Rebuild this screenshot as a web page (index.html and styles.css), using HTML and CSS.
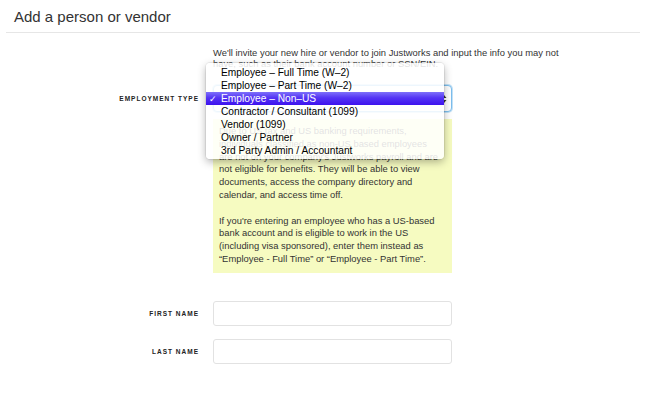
FILE: index.html
```html
<!DOCTYPE html>
<html lang="en">
<head>
<meta charset="utf-8">
<title>Add a person or vendor</title>
<link rel="stylesheet" href="styles.css">
</head>
<body>
<div class="page">
  <header class="page-header">
    <h1 class="page-title">Add a person or vendor</h1>
  </header>

  <div class="form">
    <div class="row row-intro">
      <div></div>
      <p class="intro">We'll invite your new hire or vendor to join Justworks and input the info you may not have, such as their bank account number or SSN/EIN.</p>
    </div>

    <div class="row row-type">
      <label class="field-label">Employment type</label>
      <div class="select-wrap">
        <div class="select">
          <span class="select-value">Employee - Non-US</span>
          <svg class="select-arrows" width="6" height="10" viewBox="0 0 6 10"><path d="M0.5 4 L3 1 L5.5 4 Z M0.5 6 L3 9 L5.5 6 Z" fill="#333"/></svg>
        </div>
        <ul class="menu">
          <li class="menu-item"><span class="check"></span>Employee – Full Time (W–2)</li>
          <li class="menu-item"><span class="check"></span>Employee – Part Time (W–2)</li>
          <li class="menu-item selected"><span class="check">✓</span>Employee – Non–US</li>
          <li class="menu-item"><span class="check"></span>Contractor / Consultant (1099)</li>
          <li class="menu-item"><span class="check"></span>Vendor (1099)</li>
          <li class="menu-item"><span class="check"></span>Owner / Partner</li>
          <li class="menu-item"><span class="check"></span>3rd Party Admin / Accountant</li>
        </ul>
      </div>
    </div>

    <div class="row row-info">
      <div></div>
      <div class="info-box">
        <p>Due to US tax and US banking requirements, individuals classified as non-US based employees are not on your company's Justworks payroll and are not eligible for benefits. They will be able to view documents, access the company directory and calendar, and access time off.</p>
        <p>If you're entering an employee who has a US-based bank account and is eligible to work in the US (including visa sponsored), enter them instead as “Employee - Full Time” or “Employee - Part Time”.</p>
      </div>
    </div>

    <div class="row row-first">
      <label class="field-label">First name</label>
      <div class="input"></div>
    </div>

    <div class="row row-last">
      <label class="field-label">Last name</label>
      <div class="input"></div>
    </div>
  </div>
</div>
</body>
</html>
```

FILE: styles.css
```css
* { box-sizing: border-box; }

body {
  margin: 0;
  background: #ffffff;
  font-family: "Liberation Sans", Arial, sans-serif;
  color: #333333;
}

.page {
  margin: 0 9px 0 6px;
}

.page-header {
  height: 33px;
  display: flex;
  align-items: center;
  padding-left: 8px;
  border-bottom: 1px solid #e6e6e6;
}

.page-title {
  margin: 0;
  font-size: 15px;
  font-weight: normal;
  color: #333333;
}

.form {
  display: flex;
  flex-direction: column;
}

.row {
  display: grid;
  grid-template-columns: 193px 239px;
  column-gap: 14px;
  align-items: center;
}

.row-intro { margin-top: 14px; }
.row-type { margin-top: 16px; }
.row-info { margin-top: 7px; }
.row-first { margin-top: 28px; }
.row-last { margin-top: 13px; }

.intro {
  margin: 0;
  width: 360px;
  font-size: 9.4px;
  line-height: 11px;
  color: #333333;
}

.field-label {
  text-align: right;
  font-size: 6.5px;
  font-weight: bold;
  letter-spacing: 1px;
  text-transform: uppercase;
  color: #222222;
}

.select-wrap {
  position: relative;
}

.select {
  height: 27px;
  border: 1px solid #7dbfee;
  box-shadow: 0 0 0 1px rgba(125, 191, 238, 0.45);
  border-radius: 4px;
  background: #ffffff;
  display: flex;
  align-items: center;
  justify-content: space-between;
  padding: 0 4px 0 8px;
  font-size: 10px;
  color: #333333;
}

.select-arrows { display: block; }

.menu {
  position: absolute;
  top: -22px;
  left: -7px;
  width: 238px;
  margin: 0;
  padding: 3px 0 2px;
  list-style: none;
  background: rgba(255, 255, 255, 0.86);
  border-radius: 4px;
  box-shadow: 0 0 0 1px rgba(0, 0, 0, 0.06), 0 3px 9px rgba(0, 0, 0, 0.3);
  z-index: 10;
}

.menu-item {
  display: flex;
  align-items: center;
  height: 13px;
  padding-left: 3px;
  font-size: 10.2px;
  color: #000000;
  white-space: nowrap;
}

.menu-item.selected {
  background: linear-gradient(to bottom, #7e70fa 0%, #5434f4 45%, #3d12ee 100%);
  color: #ffffff;
}

.check {
  display: inline-block;
  width: 12px;
  font-size: 9px;
}

.info-box {
  background: #f6fbc1;
  padding: 6px 9px 7px 6px;
  font-size: 9.4px;
  line-height: 12.8px;
  color: #333333;
}

.info-box p { margin: 0; }
.info-box p + p { margin-top: 12.8px; }

.input {
  height: 25px;
  border: 1px solid #e2e2e2;
  border-radius: 3px;
  background: #ffffff;
}
```
